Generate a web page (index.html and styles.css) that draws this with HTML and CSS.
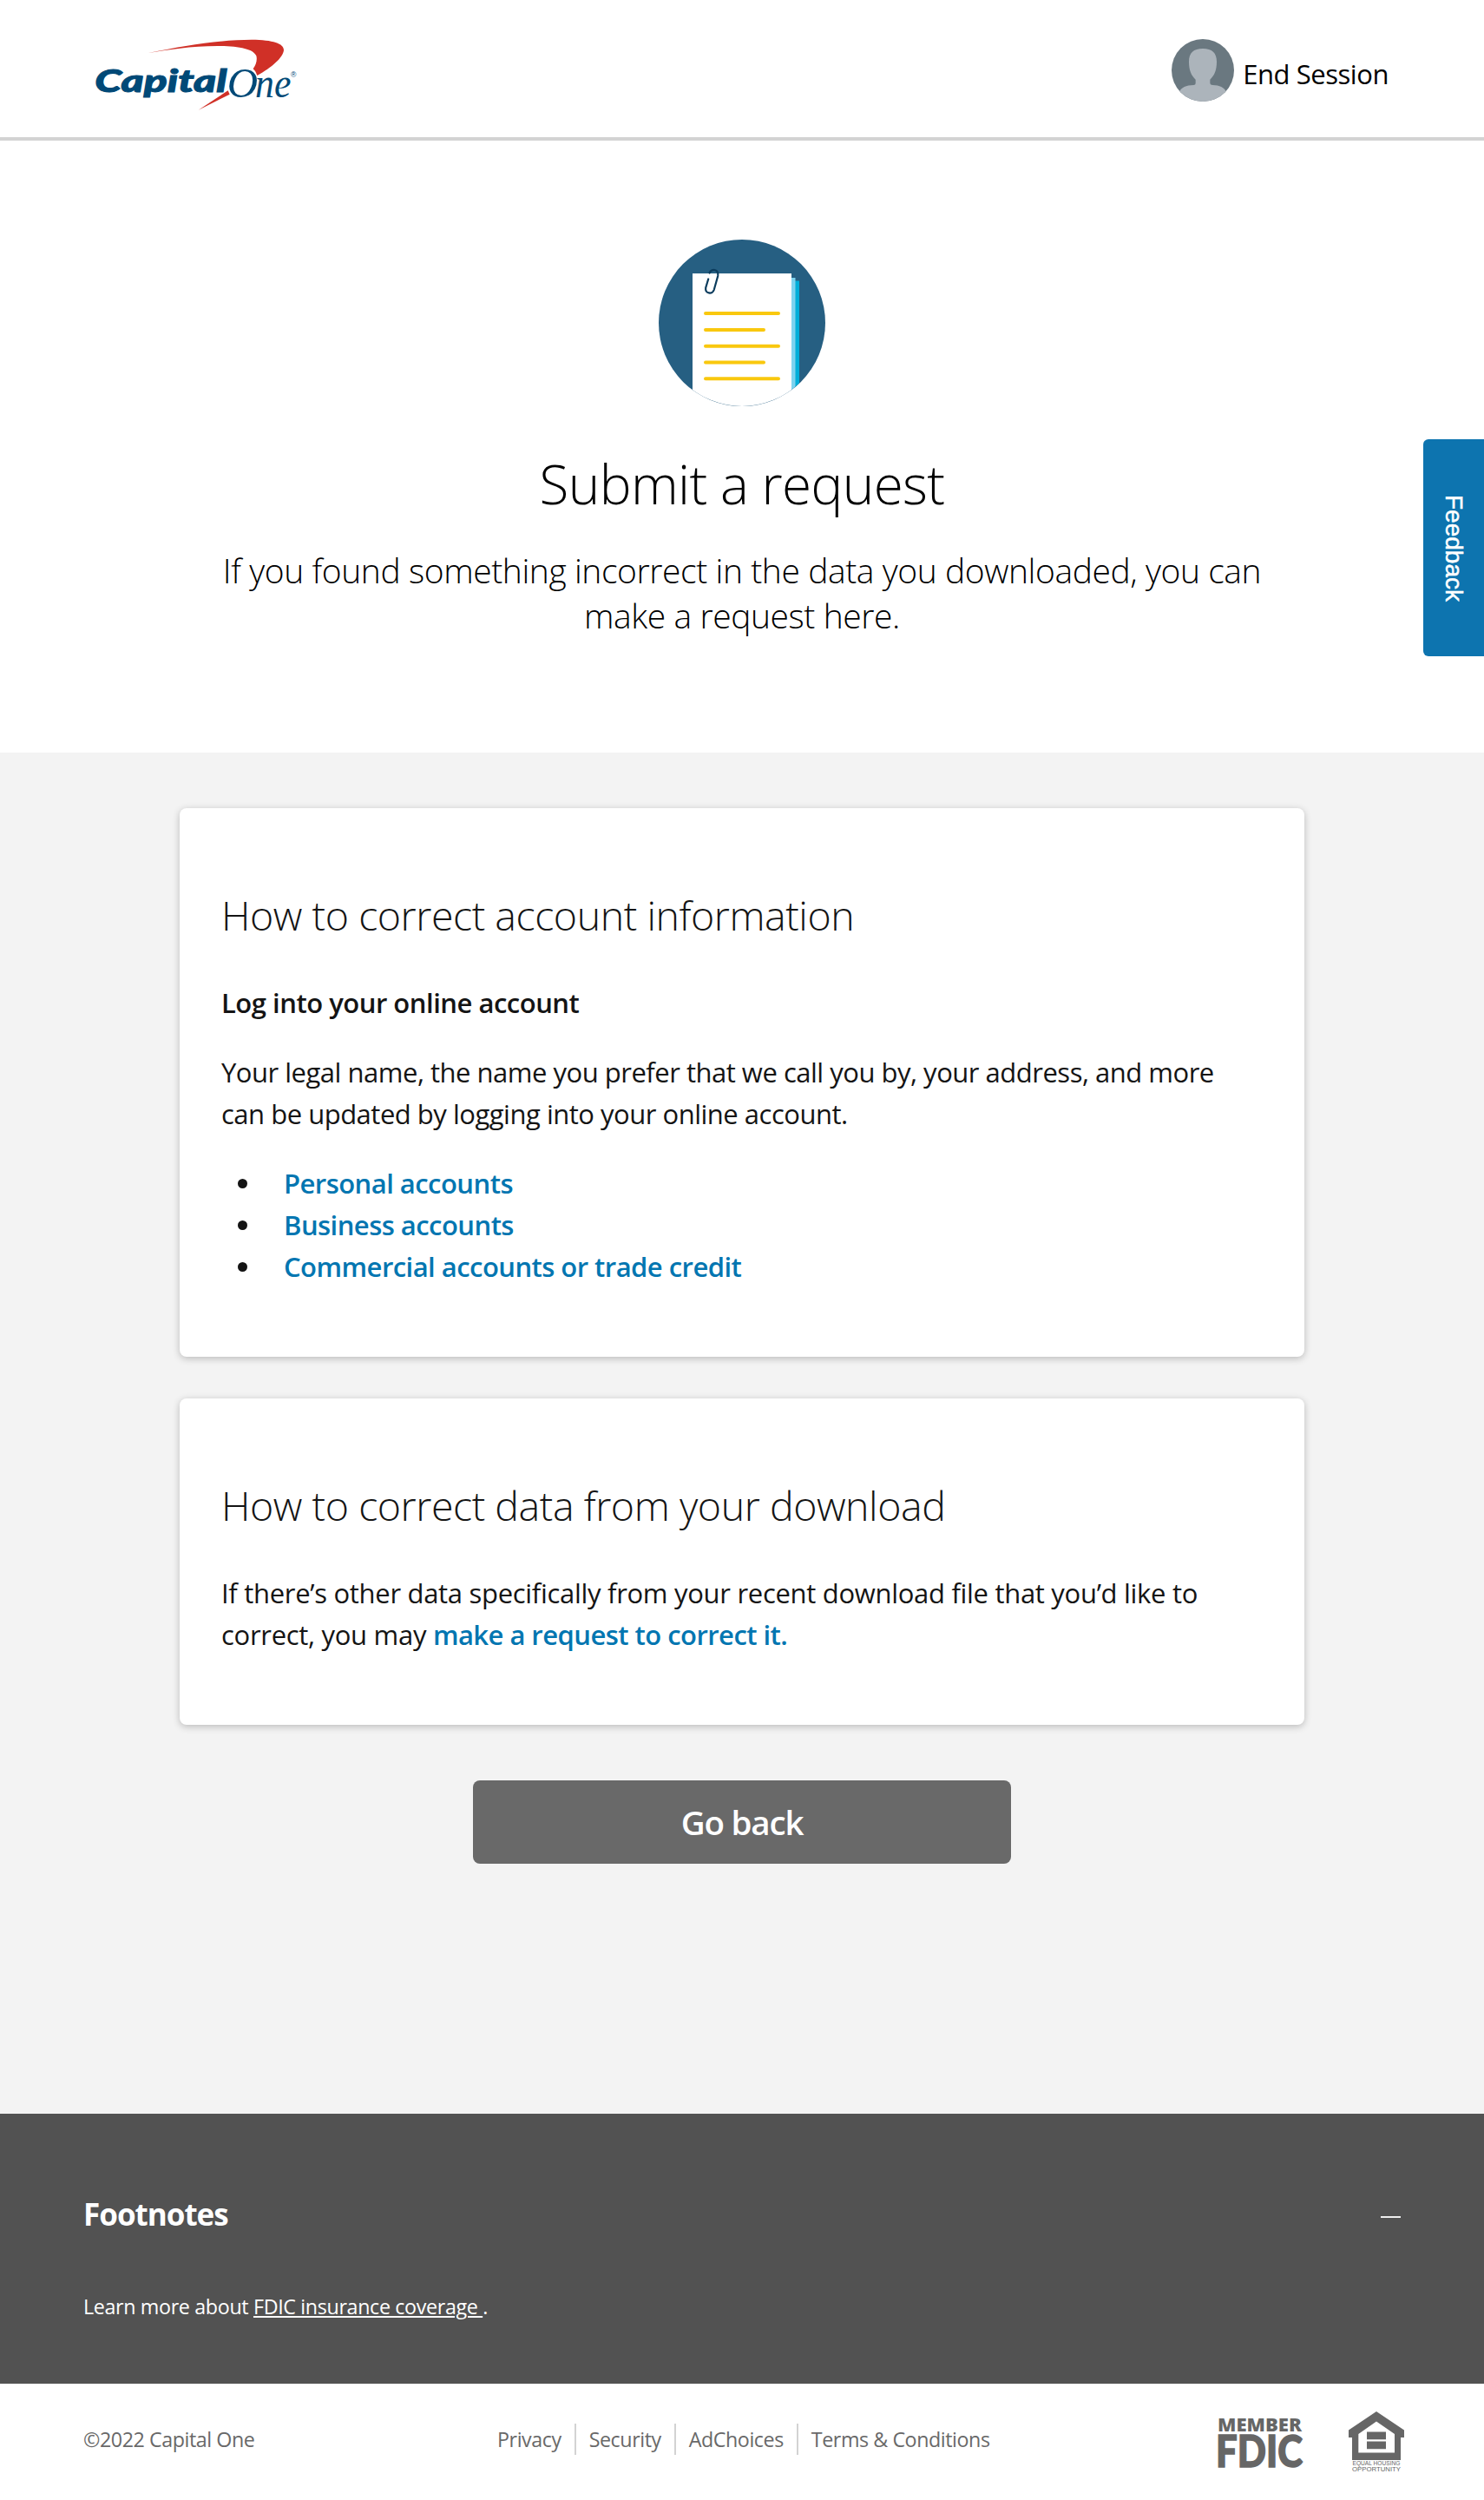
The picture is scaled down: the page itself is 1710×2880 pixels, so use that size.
FILE: index.html
```
<!DOCTYPE html>
<html lang="en">
<head>
<meta charset="utf-8">
<title>Submit a request</title>
<link rel="stylesheet" href="styles.css">
</head>
<body>
<header class="header">
  <svg class="logo" viewBox="60 40 702 255" role="img" aria-label="Capital One">
    <path fill="#d03027" d="M240 95C370 67 500 48 600 48C675 49 712 61 711 85C708 110 670 144 619 172C615 161 611 154 605 149C615 135 620 118 616 104C606 80 555 70 482 70C390 70 310 83 240 95Z"/>
    <path fill="#d03027" d="M518 224L416 291L524 237Z"/>
    <text class="logo-capital" x="58" y="228" textLength="456" lengthAdjust="spacingAndGlyphs">Capital</text>
    <text class="logo-one" x="515" y="247" textLength="106" lengthAdjust="spacingAndGlyphs">O</text>
    <text class="logo-one" x="612" y="247" textLength="124" lengthAdjust="spacingAndGlyphs">ne</text>
    <text class="logo-reg" x="735" y="179">®</text>
  </svg>
  <a class="session">
    <svg class="avatar" viewBox="0 0 216 216" aria-hidden="true">
      <defs><clipPath id="avatar-clip"><circle cx="108" cy="108" r="108"/></clipPath></defs>
      <circle cx="108" cy="108" r="108" fill="#6a7880"/>
      <path clip-path="url(#avatar-clip)" fill="#acb4bb" d="M108 33C140 33 156 48 156 78C156 108 148 126 133 140V153Q134 159 142 159C166 160 182 166 190 184V216H26V184C34 166 50 160 76 159Q83 159 83 153V140C68 126 60 108 60 78C60 48 76 33 108 33Z"/>
    </svg>
    <span>End Session</span>
  </a>
</header>

<section class="hero">
  <svg class="hero-icon" viewBox="0 0 192 192" aria-hidden="true">
    <defs><clipPath id="hero-clip"><circle cx="96" cy="96" r="95.9"/></clipPath></defs>
    <circle cx="96" cy="96" r="96" fill="#265f82"/>
    <g clip-path="url(#hero-clip)">
      <path fill="#00aed9" d="M157 47.5h5V192h-5z"/>
      <path fill="#7dd3ef" d="M153 44h4.500V192H153z"/>
      <path fill="#fff" d="M39 39h114v153H39z"/>
    </g>
    <path stroke="#f9c80e" stroke-width="4" stroke-linecap="round" d="M54 85h84M54 104h67M54 122.700h84M54 141.500h67M54 160.300h84"/>
    <path fill="none" stroke="#0b3c5d" stroke-width="2.200" stroke-linecap="round" d="M57.200 45.500L54.200 55.500C53.200 62.500 62 63.500 63.700 58L68.200 42C69.500 33.500 60.500 33 58.500 38.500"/>
  </svg>
  <h1 class="title">Submit a request</h1>
  <p class="subtitle">If you found something incorrect in the data you downloaded, you can make a request here.</p>
</section>

<main class="main">
  <section class="card">
    <h2 class="card-title">How to correct account information</h2>
    <h3 class="card-subtitle">Log into your online account</h3>
    <p class="card-text">Your legal name, the name you prefer that we call you by, your address, and more can be updated by logging into your online account.</p>
    <ul class="links">
      <li><a class="link">Personal accounts</a></li>
      <li><a class="link">Business accounts</a></li>
      <li><a class="link">Commercial accounts or trade credit</a></li>
    </ul>
  </section>
  <section class="card">
    <h2 class="card-title">How to correct data from your download</h2>
    <p class="card-text card-text-loose">If there’s other data specifically from your recent download file that you’d like to correct, you may <a class="link">make a request to correct it.</a></p>
  </section>
  <button class="back">Go back</button>
</main>

<section class="footnotes">
  <div class="footnotes-head">
    <h2 class="footnotes-title">Footnotes</h2>
    <span class="minus"></span>
  </div>
  <p class="footnotes-text">Learn more about <a class="footnotes-link">FDIC insurance coverage&nbsp;</a>.</p>
</section>

<footer class="footer">
  <span class="copyright">©2022 Capital One</span>
  <nav class="legal">
    <a>Privacy</a><a>Security</a><a>AdChoices</a><a>Terms &amp; Conditions</a>
  </nav>
  <div class="badges">
    <svg class="fdic" viewBox="0 0 96 60" role="img" aria-label="Member FDIC">
      <text class="fdic-member" x="-1" y="17" textLength="97" lengthAdjust="spacingAndGlyphs">MEMBER</text>
      <text class="fdic-name" x="-3" y="58" textLength="100" lengthAdjust="spacingAndGlyphs">FDIC</text>
    </svg>
    <svg class="housing" viewBox="0 0 64 70" role="img" aria-label="Equal Housing Opportunity">
      <path fill="#666" fill-rule="evenodd" d="M32 0L64 21.500V30H60V56H4V30H0V21.500ZM32 11.500L11.300 26V47.500H53V26Z"/>
      <path fill="#666" d="M21 23.500h22v8.700H21zM21 34.500h22v8.800H21z"/>
      <text class="housing-text" x="4.500" y="62.300" textLength="55" lengthAdjust="spacingAndGlyphs">EQUAL HOUSING</text>
      <text class="housing-text" x="4" y="68.800" textLength="56" lengthAdjust="spacingAndGlyphs">OPPORTUNITY</text>
    </svg>
  </div>
</footer>

<button class="feedback">Feedback</button>
</body>
</html>
```
FILE: styles.css
```
* { box-sizing: border-box; }

body {
  margin: 0;
  color: #141414;
  background: #fff;
  font-family: "Open Sans", "Noto Sans", sans-serif;
}

h1, h2, h3, p, ul { margin: 0; padding: 0; font-weight: 400; }

button { border: 0; padding: 0; font-family: inherit; }

svg { overflow: visible; }

.header {
  display: flex;
  justify-content: space-between;
  align-items: flex-start;
  height: 162px;
  padding: 43px 110px 0;
  border-bottom: 4px solid #d3d3d3;
}

.logo { width: 234px; height: 85px; }
.logo-capital { font: italic 900 109px Lato, sans-serif; fill: #004977; stroke: #004977; stroke-width: 3px; }
.logo-one { font: italic 400 146px "Liberation Serif", serif; fill: #004977; }
.logo-reg { font: 26px "Liberation Sans", sans-serif; fill: #004977; }

.session {
  display: flex;
  gap: 10px;
  padding-top: 2px;
  color: #000;
  font-size: 31px;
  line-height: 48px;
  letter-spacing: -0.45px;
}
.session span { padding-top: 16px; }
.avatar { width: 72px; height: 72px; }

.hero {
  display: flex;
  flex-direction: column;
  align-items: center;
  height: 705px;
  padding-top: 114px;
  color: #000;
  text-align: center;
}
.hero-icon { width: 192px; height: 192px; }
.title {
  margin-top: 49px;
  font-size: 62px;
  font-weight: 300;
  line-height: 80px;
  letter-spacing: -0.65px;
}
.subtitle {
  width: 1240px;
  margin-top: 34px;
  font-size: 39px;
  font-weight: 300;
  line-height: 52px;
  letter-spacing: -0.42px;
}

.main {
  display: flex;
  flex-direction: column;
  align-items: center;
  gap: 48px;
  height: 1568px;
  padding-top: 64px;
  background: #f3f3f3;
}
.card {
  width: 1296px;
  padding: 93px 48px 80px;
  border-radius: 8px;
  background: #fff;
  box-shadow: 0 2px 8px rgba(0, 0, 0, 0.24);
}
.card-title {
  margin-bottom: 47px;
  font-size: 46.5px;
  font-weight: 300;
  line-height: 60px;
  letter-spacing: -0.45px;
}
.card-subtitle, .card-text, .links {
  font-size: 31px;
  line-height: 48px;
  letter-spacing: -0.49px;
}
.card-subtitle { margin-bottom: 32px; font-weight: 600; }
.card-text-loose { letter-spacing: -0.3px; }
.links { margin-top: 32px; list-style: none; }
.links li { display: flex; align-items: center; gap: 42px; padding-left: 19px; }
.links li::before {
  content: "";
  width: 11px;
  height: 11px;
  border-radius: 50%;
  background: #141414;
}
.link { color: #0276b1; font-weight: 600; letter-spacing: -0.54px; }

.back {
  width: 620px;
  height: 96px;
  margin-top: 16px;
  border-radius: 8px;
  background: #696969;
  color: #fff;
  font-size: 38.5px;
  font-weight: 600;
  letter-spacing: -1.2px;
}

.footnotes {
  height: 311px;
  padding: 92px 96px 0;
  background: #525252;
  color: #fff;
}
.footnotes-head { display: flex; justify-content: space-between; align-items: center; }
.footnotes-title {
  font-size: 35px;
  font-weight: 700;
  line-height: 48px;
  letter-spacing: -1px;
}
.minus { width: 23px; height: 2px; margin-top: 6px; background: #eee; }
.footnotes-text {
  margin-top: 64px;
  font-size: 23.25px;
  line-height: 36px;
  letter-spacing: -0.34px;
}
.footnotes-link { text-decoration: underline; text-decoration-thickness: 2px; text-underline-offset: 2px; }

.footer {
  display: grid;
  grid-template-columns: 477px 1fr auto;
  align-items: start;
  height: 134px;
  padding: 32px 92px 0 96px;
  color: #696969;
  font-size: 23.25px;
  line-height: 36px;
  letter-spacing: -0.43px;
}
.copyright, .legal { padding-top: 14px; }
.legal { display: flex; }
.legal a { padding-right: 15px; }
.legal a + a { padding-left: 15px; border-left: 2px solid #d3d3d3; }
.badges { display: flex; gap: 54px; }
.fdic { width: 96px; height: 60px; margin-top: 6px; }
.fdic-member { font: 800 21.5px "Open Sans", sans-serif; letter-spacing: 0; fill: #666; }
.fdic-name { font: 900 51px Lato, sans-serif; letter-spacing: 0; fill: #666; stroke: #666; stroke-width: 1.5px; }
.housing { width: 64px; height: 70px; }
.housing-text { font: 7px "Liberation Sans", sans-serif; letter-spacing: 0; fill: #666; }

.feedback {
  position: absolute;
  top: 506px;
  right: 0;
  width: 70px;
  height: 250px;
  border-radius: 6px 0 0 6px;
  background: #0d74af;
  color: #fff;
  font: 28px/70px "Liberation Sans", Arial, sans-serif;
  -webkit-text-stroke: 0.5px #fff;
  writing-mode: vertical-rl;
}
```
